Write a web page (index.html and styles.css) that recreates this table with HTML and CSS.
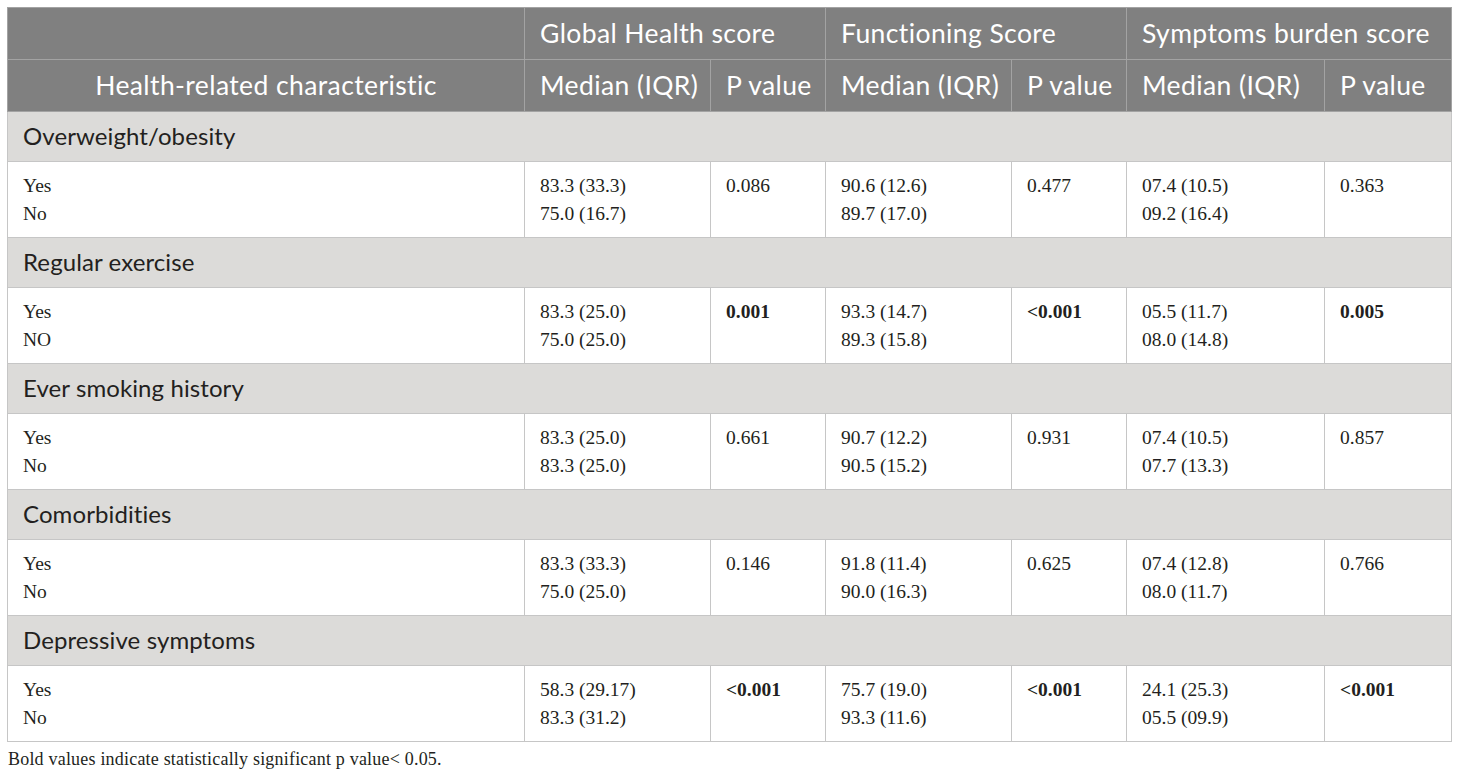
FILE: index.html
```html
<!DOCTYPE html>
<html>
<head>
<meta charset="utf-8">
<link rel="stylesheet" href="styles.css">
</head>
<body>
<div class="page">
<table class="qol">
  <colgroup>
    <col class="c-char">
    <col class="c-med">
    <col class="c-p">
    <col class="c-med">
    <col class="c-p">
    <col class="c-med2">
    <col class="c-p2">
  </colgroup>
  <thead>
    <tr class="hrow">
      <th class="blank"></th>
      <th colspan="2">Global Health score</th>
      <th colspan="2">Functioning Score</th>
      <th colspan="2">Symptoms burden score</th>
    </tr>
    <tr class="hrow">
      <th class="center">Health-related characteristic</th>
      <th>Median (IQR)</th>
      <th>P value</th>
      <th>Median (IQR)</th>
      <th>P value</th>
      <th>Median (IQR)</th>
      <th>P value</th>
    </tr>
  </thead>
  <tbody>
    <tr class="section"><td colspan="7">Overweight/obesity</td></tr>
    <tr class="data">
      <td>Yes<br>No</td>
      <td>83.3 (33.3)<br>75.0 (16.7)</td>
      <td>0.086</td>
      <td>90.6 (12.6)<br>89.7 (17.0)</td>
      <td>0.477</td>
      <td>07.4 (10.5)<br>09.2 (16.4)</td>
      <td>0.363</td>
    </tr>
    <tr class="section"><td colspan="7">Regular exercise</td></tr>
    <tr class="data">
      <td>Yes<br>NO</td>
      <td>83.3 (25.0)<br>75.0 (25.0)</td>
      <td><b>0.001</b></td>
      <td>93.3 (14.7)<br>89.3 (15.8)</td>
      <td><b>&lt;0.001</b></td>
      <td>05.5 (11.7)<br>08.0 (14.8)</td>
      <td><b>0.005</b></td>
    </tr>
    <tr class="section"><td colspan="7">Ever smoking history</td></tr>
    <tr class="data">
      <td>Yes<br>No</td>
      <td>83.3 (25.0)<br>83.3 (25.0)</td>
      <td>0.661</td>
      <td>90.7 (12.2)<br>90.5 (15.2)</td>
      <td>0.931</td>
      <td>07.4 (10.5)<br>07.7 (13.3)</td>
      <td>0.857</td>
    </tr>
    <tr class="section"><td colspan="7">Comorbidities</td></tr>
    <tr class="data">
      <td>Yes<br>No</td>
      <td>83.3 (33.3)<br>75.0 (25.0)</td>
      <td>0.146</td>
      <td>91.8 (11.4)<br>90.0 (16.3)</td>
      <td>0.625</td>
      <td>07.4 (12.8)<br>08.0 (11.7)</td>
      <td>0.766</td>
    </tr>
    <tr class="section"><td colspan="7">Depressive symptoms</td></tr>
    <tr class="data">
      <td>Yes<br>No</td>
      <td>58.3 (29.17)<br>83.3 (31.2)</td>
      <td><b>&lt;0.001</b></td>
      <td>75.7 (19.0)<br>93.3 (11.6)</td>
      <td><b>&lt;0.001</b></td>
      <td>24.1 (25.3)<br>05.5 (09.9)</td>
      <td><b>&lt;0.001</b></td>
    </tr>
  </tbody>
</table>
<p class="note">Bold values indicate statistically significant p value&lt; 0.05.</p>
</div>
</body>
</html>
```

FILE: styles.css
```css
html, body {
  margin: 0;
  padding: 0;
  background: #ffffff;
}

.page {
  padding: 7px 8px 0 7px;
}

.qol {
  border-collapse: collapse;
  width: 1445px;
  table-layout: fixed;
  color: #231f20;
}

.c-char { width: 517px; }
.c-med { width: 186px; }
.c-p { width: 115px; }
.c-med2 { width: 198px; }
.c-p2 { width: 127px; }

.hrow th {
  background: #808080;
  color: #ffffff;
  font-family: "Lato", "Noto Sans", sans-serif;
  font-weight: 400;
  font-size: 26.5px;
  letter-spacing: 0.4px;
  line-height: 30px;
  text-align: left;
  padding: 0 0 2px 15px;
  height: 49px;
  border: 1px solid #a3a3a3;
  white-space: nowrap;
}

.hrow th.center {
  text-align: center;
  padding: 0 0 2px 0;
}

.section td {
  background: #dcdbd9;
  font-family: "Lato", "Noto Sans", sans-serif;
  font-size: 24px;
  letter-spacing: 0.1px;
  line-height: 28px;
  height: 47px;
  padding: 0 0 2px 15px;
  border: 1px solid #c6c6c6;
  color: #231f20;
}

.data td {
  font-family: "Liberation Serif", "Times New Roman", serif;
  font-size: 19.5px;
  line-height: 28px;
  vertical-align: top;
  padding: 10px 0 9px 15px;
  border: 1px solid #c6c6c6;
}

.data td b {
  font-weight: 700;
}

.note {
  margin: 6px 0 0 1px;
  font-family: "Liberation Serif", "Times New Roman", serif;
  font-size: 18px;
  letter-spacing: 0.2px;
  line-height: 22px;
  color: #231f20;
}
```
